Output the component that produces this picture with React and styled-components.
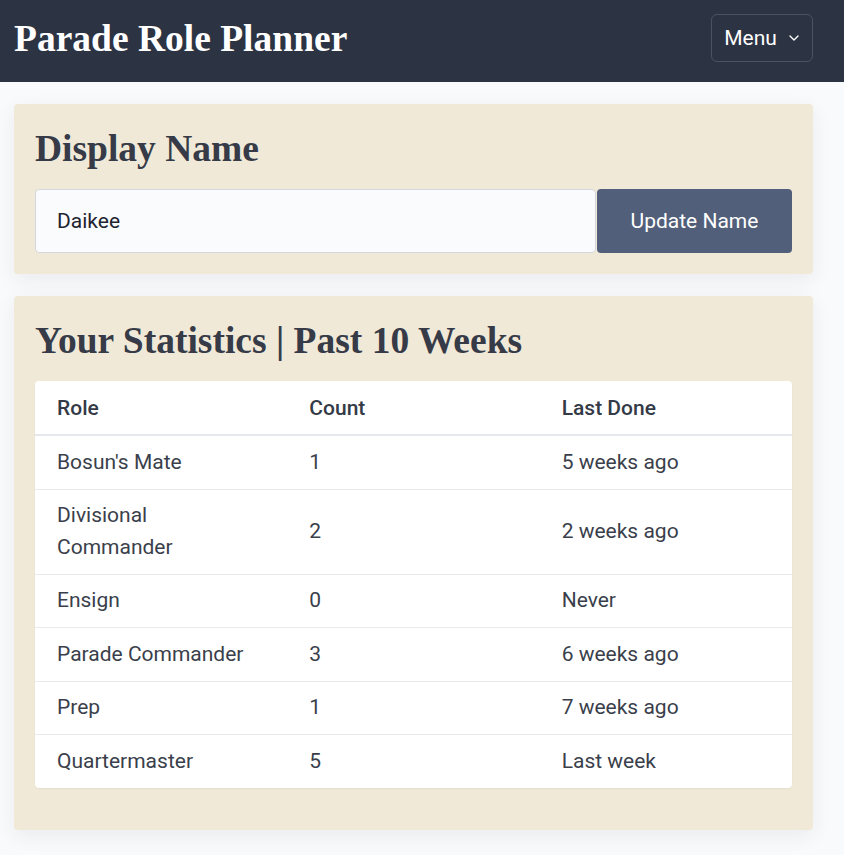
import React from 'react';
import styled, { createGlobalStyle } from 'styled-components';
import { ChevronDown } from 'lucide-react';

const GlobalStyle = createGlobalStyle`
  body {
    margin: 0;
    background: #f9fafb;
    font-family: Roboto, "Liberation Sans", sans-serif;
    color: #374151;
  }
  * { box-sizing: border-box; }
`;

const stats = [
  { role: "Bosun's Mate", count: 1, last: '5 weeks ago' },
  { role: 'Divisional Commander', count: 2, last: '2 weeks ago' },
  { role: 'Ensign', count: 0, last: 'Never' },
  { role: 'Parade Commander', count: 3, last: '6 weeks ago' },
  { role: 'Prep', count: 1, last: '7 weeks ago' },
  { role: 'Quartermaster', count: 5, last: 'Last week' },
];

const App = () => {
  return (
    <>
      <GlobalStyle />
      <Header>
        <Title>Parade Role Planner</Title>
        <MenuButton>
          Menu <ChevronDown size={16} strokeWidth={2} />
        </MenuButton>
      </Header>
      <Main>
        <Card>
          <Heading>Display Name</Heading>
          <NameForm onSubmit={e => e.preventDefault()}>
            <NameInput defaultValue="Daikee" />
            <SubmitButton type="submit">Update Name</SubmitButton>
          </NameForm>
        </Card>
        <Card $bottom={42}>
          <Heading>Your Statistics | Past 10 Weeks</Heading>
          <Table>
            <thead>
              <tr>
                <Th>Role</Th>
                <Th>Count</Th>
                <Th>Last Done</Th>
              </tr>
            </thead>
            <tbody>
              {stats.map(s => (
                <Row key={s.role}>
                  <Td>{s.role}</Td>
                  <Td>{s.count}</Td>
                  <Td>{s.last}</Td>
                </Row>
              ))}
            </tbody>
          </Table>
        </Card>
      </Main>
    </>
  );
};

export default App;

const Header = styled.header`
  height: 82px;
  background: #2c3343;
  display: flex;
  align-items: center;
  justify-content: space-between;
  padding: 0 31px 0 14px;
`;

const Title = styled.h1`
  margin: 0;
  color: #ffffff;
  font-family: "Liberation Serif", serif;
  font-weight: 700;
  font-size: 37.5px;
  line-height: 1;
  padding-bottom: 4px;
`;

const MenuButton = styled.button`
  display: flex;
  align-items: center;
  gap: 9px;
  height: 48px;
  width: 102px;
  justify-content: center;
  padding: 0 10px 0 12px;
  margin-top: -7px;
  background: transparent;
  border: 1px solid #4a5366;
  border-radius: 6px;
  color: #ffffff;
  font-family: Roboto, sans-serif;
  font-size: 21px;
  cursor: pointer;
`;

const Main = styled.main`
  display: flex;
  flex-direction: column;
  gap: 22px;
  padding: 22px 31px 40px 14px;
`;

const Card = styled.section`
  background: #f1e9d8;
  border-radius: 4px;
  padding: 22px 21px ${p => p.$bottom || 21}px;
  box-shadow: 0 6px 20px rgba(30, 40, 70, 0.07);
`;

const Heading = styled.h2`
  margin: 0 0 18px;
  font-family: "Liberation Serif", serif;
  font-weight: 700;
  font-size: 37.5px;
  line-height: 45px;
  color: #363b47;
`;

const NameForm = styled.form`
  display: flex;
`;

const NameInput = styled.input`
  flex: 1;
  height: 64px;
  padding: 0 21px;
  border: 1px solid #d4d7de;
  border-radius: 4px;
  background: #fafbfc;
  font-family: Roboto, sans-serif;
  font-size: 21px;
  color: #1f2430;
  outline: none;
`;

const SubmitButton = styled.button`
  width: 195px;
  height: 64px;
  margin-left: 1px;
  border: none;
  border-radius: 4px;
  background: #525f7a;
  color: #ffffff;
  font-family: Roboto, sans-serif;
  font-size: 21px;
  cursor: pointer;
`;

const Table = styled.table`
  width: 100%;
  table-layout: fixed;
  border-collapse: collapse;
  background: #ffffff;
  border-radius: 4px;
  overflow: hidden;
  box-shadow: 0 1px 2px rgba(0, 0, 0, 0.05);
`;

const Th = styled.th`
  text-align: left;
  padding: 10px 22px;
  height: 54px;
  font-size: 21px;
  font-weight: 500;
  color: #343a46;
  border-bottom: 2px solid #e4e7ec;
`;

const Row = styled.tr`
  & + & td {
    border-top: 1px solid #e8eaee;
  }
`;

const Td = styled.td`
  padding: 10.5px 22px;
  font-size: 21px;
  line-height: 31.5px;
  color: #3a3f4b;
  vertical-align: middle;
`;
